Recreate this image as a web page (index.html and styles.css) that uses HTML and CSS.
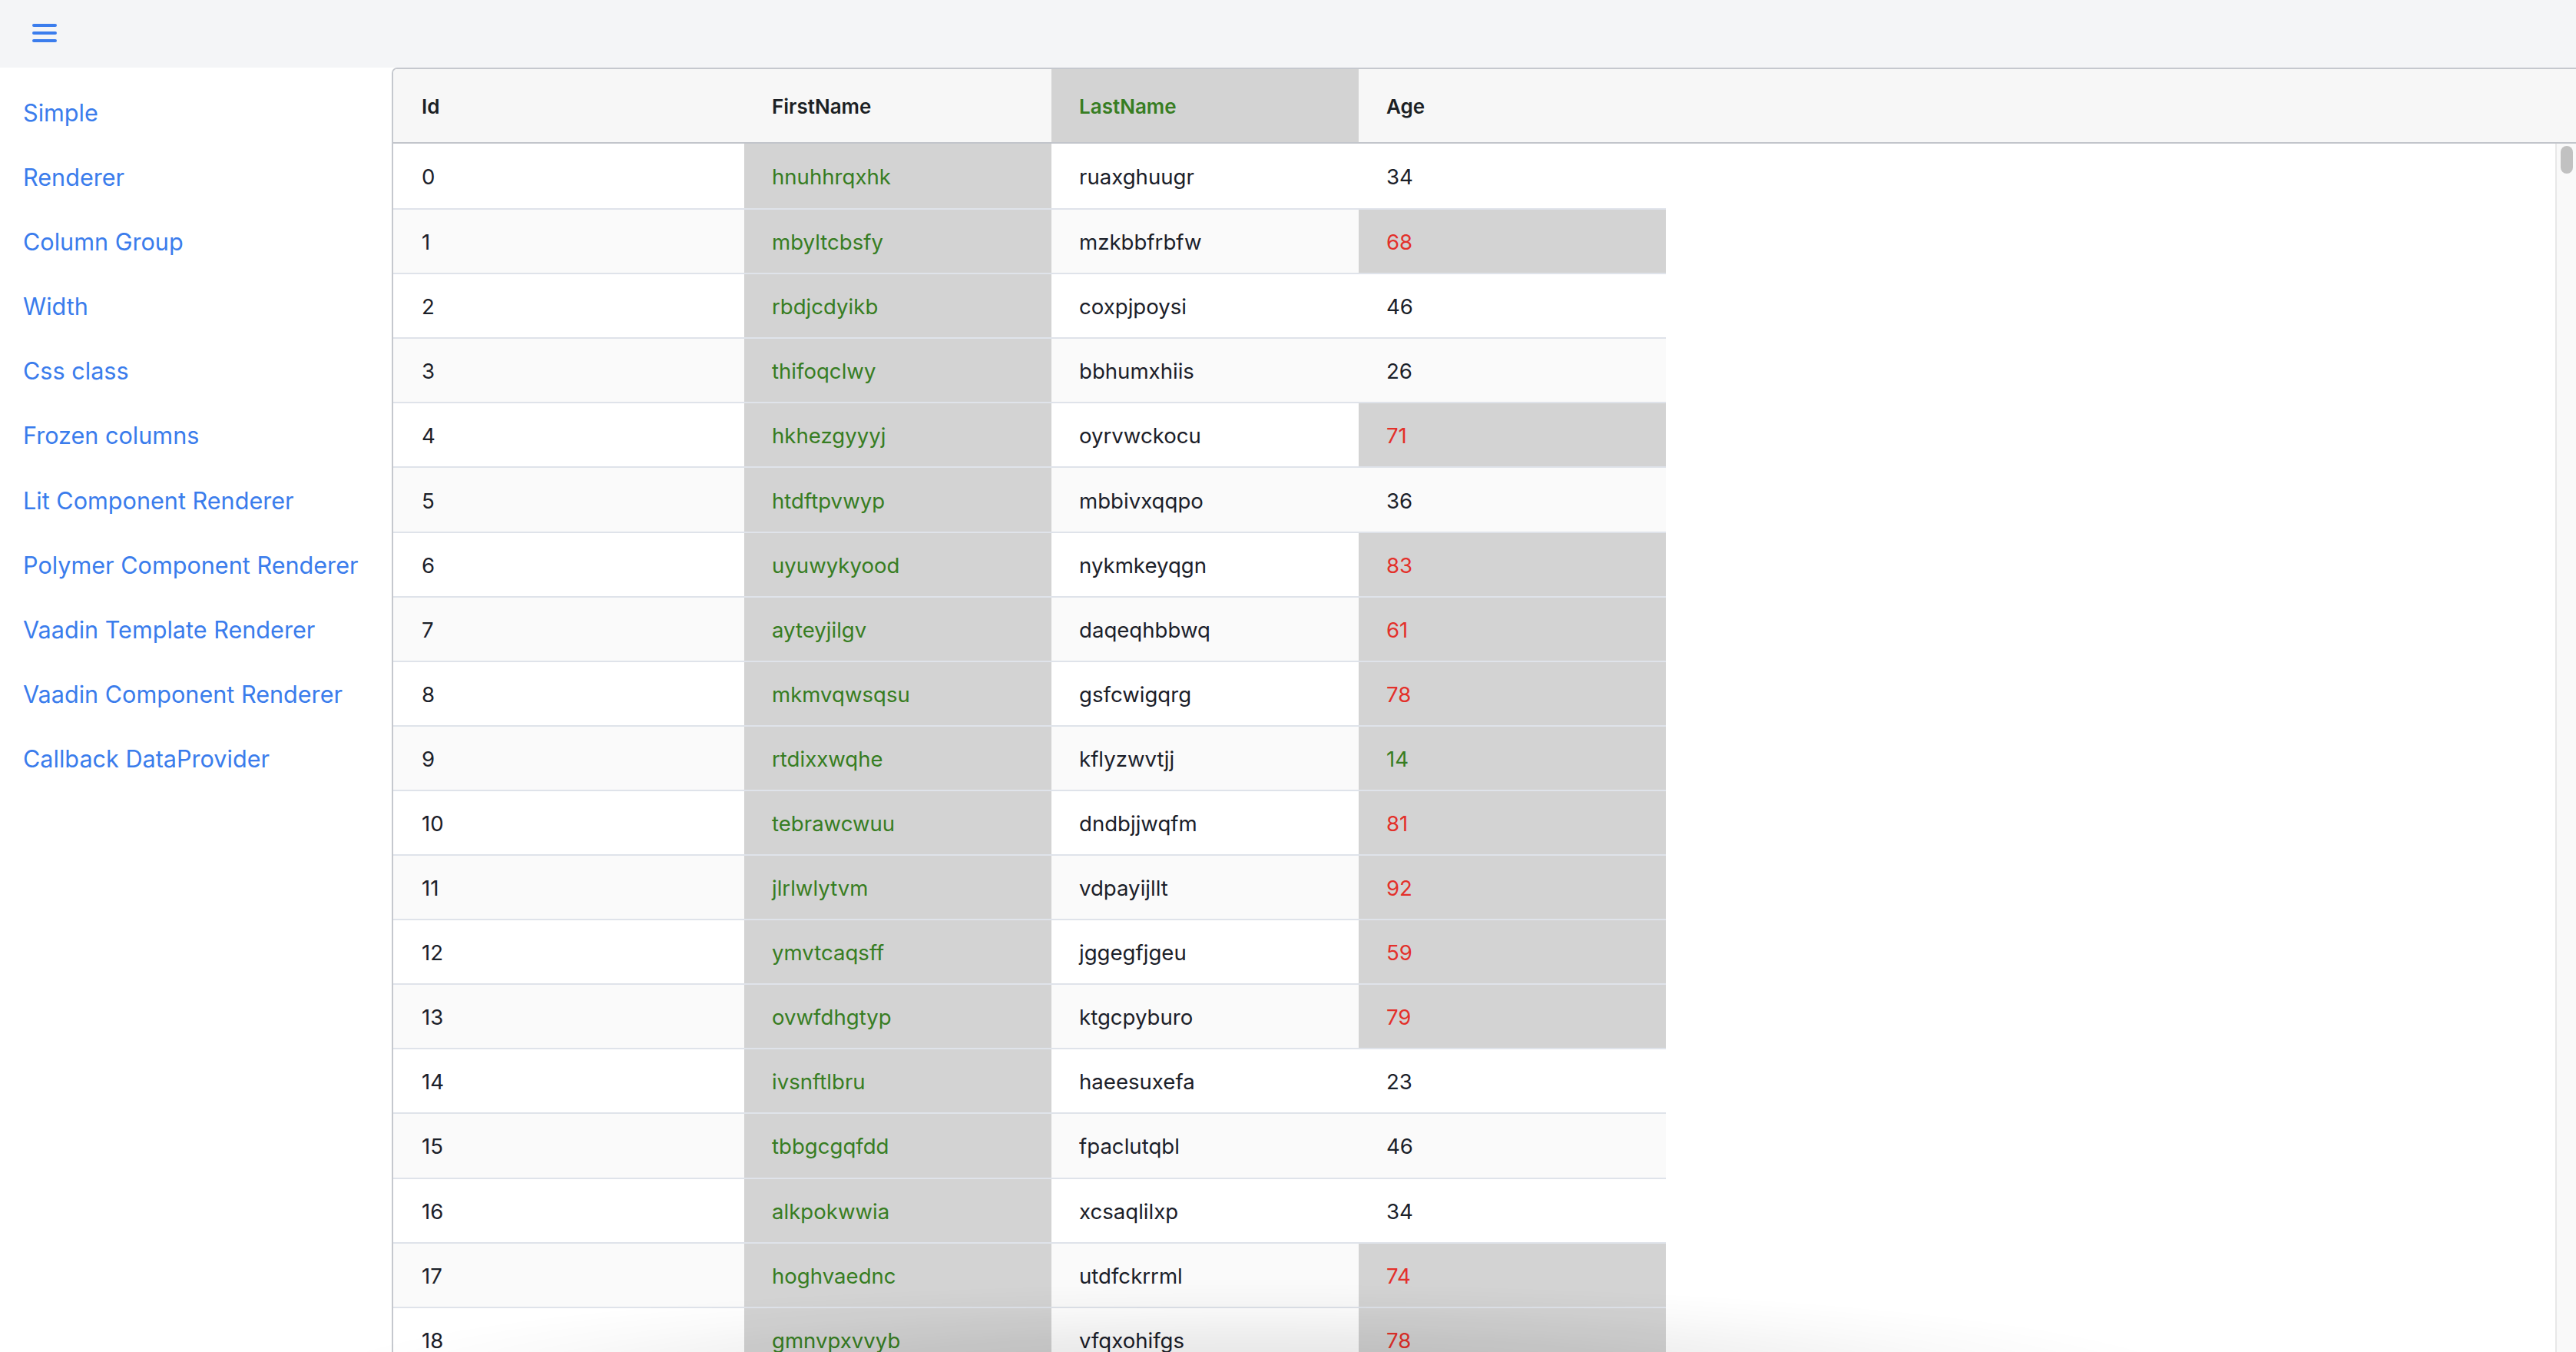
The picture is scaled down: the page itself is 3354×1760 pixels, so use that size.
FILE: index.html
```html
<!DOCTYPE html>
<html lang="en">
<head>
<meta charset="utf-8">
<title>Grid demo</title>
<link rel="stylesheet" href="styles.css">
</head>
<body>
<div class="app">
  <header class="topbar">
    <button class="menu" aria-label="Menu">
      <svg width="32" height="24" viewBox="0 0 32 24"><path d="M2 2H30M2 12H30M2 22H30" stroke="#3b7ded" stroke-width="4" stroke-linecap="round" fill="none"/></svg>
    </button>
  </header>
  <div class="main">
    <nav class="sidebar">
      <a href="#">Simple</a>
      <a href="#">Renderer</a>
      <a href="#">Column Group</a>
      <a href="#">Width</a>
      <a href="#">Css class</a>
      <a href="#">Frozen columns</a>
      <a href="#">Lit Component Renderer</a>
      <a href="#">Polymer Component Renderer</a>
      <a href="#">Vaadin Template Renderer</a>
      <a href="#">Vaadin Component Renderer</a>
      <a href="#">Callback DataProvider</a>
    </nav>
    <section class="grid">
      <div class="grid-head">
        <div class="cell c-id">Id</div>
        <div class="cell c-col">FirstName</div>
        <div class="cell c-col hl green">LastName</div>
        <div class="cell c-col">Age</div>
        <div class="head-fill"></div>
      </div>
      <div class="grid-body">
        <div class="rows-area">
          <div class="rows">
            <div class="row"><div class="cell c-id">0</div><div class="cell c-col hl green">hnuhhrqxhk</div><div class="cell c-col">ruaxghuugr</div><div class="cell c-col">34</div></div>
            <div class="row"><div class="cell c-id">1</div><div class="cell c-col hl green">mbyltcbsfy</div><div class="cell c-col">mzkbbfrbfw</div><div class="cell c-col hl red">68</div></div>
            <div class="row"><div class="cell c-id">2</div><div class="cell c-col hl green">rbdjcdyikb</div><div class="cell c-col">coxpjpoysi</div><div class="cell c-col">46</div></div>
            <div class="row"><div class="cell c-id">3</div><div class="cell c-col hl green">thifoqclwy</div><div class="cell c-col">bbhumxhiis</div><div class="cell c-col">26</div></div>
            <div class="row"><div class="cell c-id">4</div><div class="cell c-col hl green">hkhezgyyyj</div><div class="cell c-col">oyrvwckocu</div><div class="cell c-col hl red">71</div></div>
            <div class="row"><div class="cell c-id">5</div><div class="cell c-col hl green">htdftpvwyp</div><div class="cell c-col">mbbivxqqpo</div><div class="cell c-col">36</div></div>
            <div class="row"><div class="cell c-id">6</div><div class="cell c-col hl green">uyuwykyood</div><div class="cell c-col">nykmkeyqgn</div><div class="cell c-col hl red">83</div></div>
            <div class="row"><div class="cell c-id">7</div><div class="cell c-col hl green">ayteyjilgv</div><div class="cell c-col">daqeqhbbwq</div><div class="cell c-col hl red">61</div></div>
            <div class="row"><div class="cell c-id">8</div><div class="cell c-col hl green">mkmvqwsqsu</div><div class="cell c-col">gsfcwigqrg</div><div class="cell c-col hl red">78</div></div>
            <div class="row"><div class="cell c-id">9</div><div class="cell c-col hl green">rtdixxwqhe</div><div class="cell c-col">kflyzwvtjj</div><div class="cell c-col hl green">14</div></div>
            <div class="row"><div class="cell c-id">10</div><div class="cell c-col hl green">tebrawcwuu</div><div class="cell c-col">dndbjjwqfm</div><div class="cell c-col hl red">81</div></div>
            <div class="row"><div class="cell c-id">11</div><div class="cell c-col hl green">jlrlwlytvm</div><div class="cell c-col">vdpayijllt</div><div class="cell c-col hl red">92</div></div>
            <div class="row"><div class="cell c-id">12</div><div class="cell c-col hl green">ymvtcaqsff</div><div class="cell c-col">jggegfjgeu</div><div class="cell c-col hl red">59</div></div>
            <div class="row"><div class="cell c-id">13</div><div class="cell c-col hl green">ovwfdhgtyp</div><div class="cell c-col">ktgcpyburo</div><div class="cell c-col hl red">79</div></div>
            <div class="row"><div class="cell c-id">14</div><div class="cell c-col hl green">ivsnftlbru</div><div class="cell c-col">haeesuxefa</div><div class="cell c-col">23</div></div>
            <div class="row"><div class="cell c-id">15</div><div class="cell c-col hl green">tbbgcgqfdd</div><div class="cell c-col">fpaclutqbl</div><div class="cell c-col">46</div></div>
            <div class="row"><div class="cell c-id">16</div><div class="cell c-col hl green">alkpokwwia</div><div class="cell c-col">xcsaqlilxp</div><div class="cell c-col">34</div></div>
            <div class="row"><div class="cell c-id">17</div><div class="cell c-col hl green">hoghvaednc</div><div class="cell c-col">utdfckrrml</div><div class="cell c-col hl red">74</div></div>
            <div class="row"><div class="cell c-id">18</div><div class="cell c-col hl green">gmnvpxvvyb</div><div class="cell c-col">vfqxohifgs</div><div class="cell c-col hl red">78</div></div>
          </div>
        </div>
        <div class="scrollbar"><div class="thumb"></div></div>
      </div>
    </section>
  </div>
  <div class="bottom-shade"></div>
</div>
</body>
</html>
```
FILE: styles.css
```css
* { box-sizing: border-box; }
html, body {
  margin: 0;
  padding: 0;
  height: 100%;
  overflow: hidden;
  background: #ffffff;
  font-family: Inter, "Noto Sans", sans-serif;
  color: #1b2029;
}
.app {
  display: flex;
  flex-direction: column;
  height: 100vh;
}
.topbar {
  height: 88px;
  flex: none;
  background: #f4f5f7;
  display: flex;
  align-items: flex-start;
  padding: 31px 0 0 42px;
}
.menu {
  border: 0;
  background: none;
  padding: 0;
  margin: 0;
  width: 32px;
  height: 24px;
  display: block;
}
.menu svg { display: block; }
.main {
  flex: 1;
  display: flex;
  min-height: 0;
}
.sidebar {
  width: 510px;
  flex: none;
  padding-top: 17px;
  display: flex;
  flex-direction: column;
}
.sidebar a {
  display: block;
  height: 84.1px;
  line-height: 84px;
  padding-left: 30px;
  font-size: 30.6px;
  color: #3a7cec;
  text-decoration: none;
  white-space: nowrap;
}
.grid {
  flex: 1;
  min-width: 0;
  display: flex;
  flex-direction: column;
  border-left: 2px solid #c5c8ce;
  border-top: 2px solid #c5c8ce;
  border-top-left-radius: 7px;
  overflow: hidden;
  background: #ffffff;
}
.grid-head {
  flex: none;
  height: 97px;
  display: flex;
  background: #f7f7f7;
  border-bottom: 2px solid #c2c5cb;
  font-size: 26px;
  font-weight: 600;
  color: #1b1f24;
}
.head-fill { flex: 1; }
.cell {
  flex: none;
  display: flex;
  align-items: center;
  padding-left: 37px;
  padding-top: 2px;
  white-space: nowrap;
  overflow: hidden;
}
.c-id { width: 457px; }
.c-col { width: 400px; padding-left: 36px; }
.hl { background: #d3d3d3; }
.green { color: #377d22; }
.red { color: #e3302a; }
.grid-body {
  flex: 1;
  min-height: 0;
  display: flex;
}
.rows-area {
  flex: 1;
  min-width: 0;
  overflow: hidden;
  background: #ffffff;
}
.rows {
  width: 1657px;
  display: flex;
  flex-direction: column;
}
.row {
  flex: none;
  height: 84.1px;
  display: flex;
  border-top: 2px solid #dfe3ea;
  font-size: 27.6px;
  color: #1b2029;
  background: #ffffff;
}
.row:first-child { border-top: 0; }
.row:nth-child(even) { background: #fafafa; }
.row .cell.hl { background-color: #d3d3d3; }
.scrollbar {
  flex: none;
  width: 27px;
  background: #f9f9f9;
  border-left: 2px solid #e8e8e8;
  padding: 3px 0 0 5px;
}
.thumb {
  width: 16px;
  height: 36px;
  border-radius: 8px;
  background: #c1c1c1;
}
.bottom-shade {
  position: fixed;
  left: 0;
  bottom: 0;
  width: 100%;
  height: 110px;
  pointer-events: none;
  background: radial-gradient(ellipse 1240px 130px at 1630px 150px, rgba(0,0,0,0.12) 0%, rgba(0,0,0,0.07) 45%, rgba(0,0,0,0.02) 80%, rgba(0,0,0,0) 100%);
}
```
